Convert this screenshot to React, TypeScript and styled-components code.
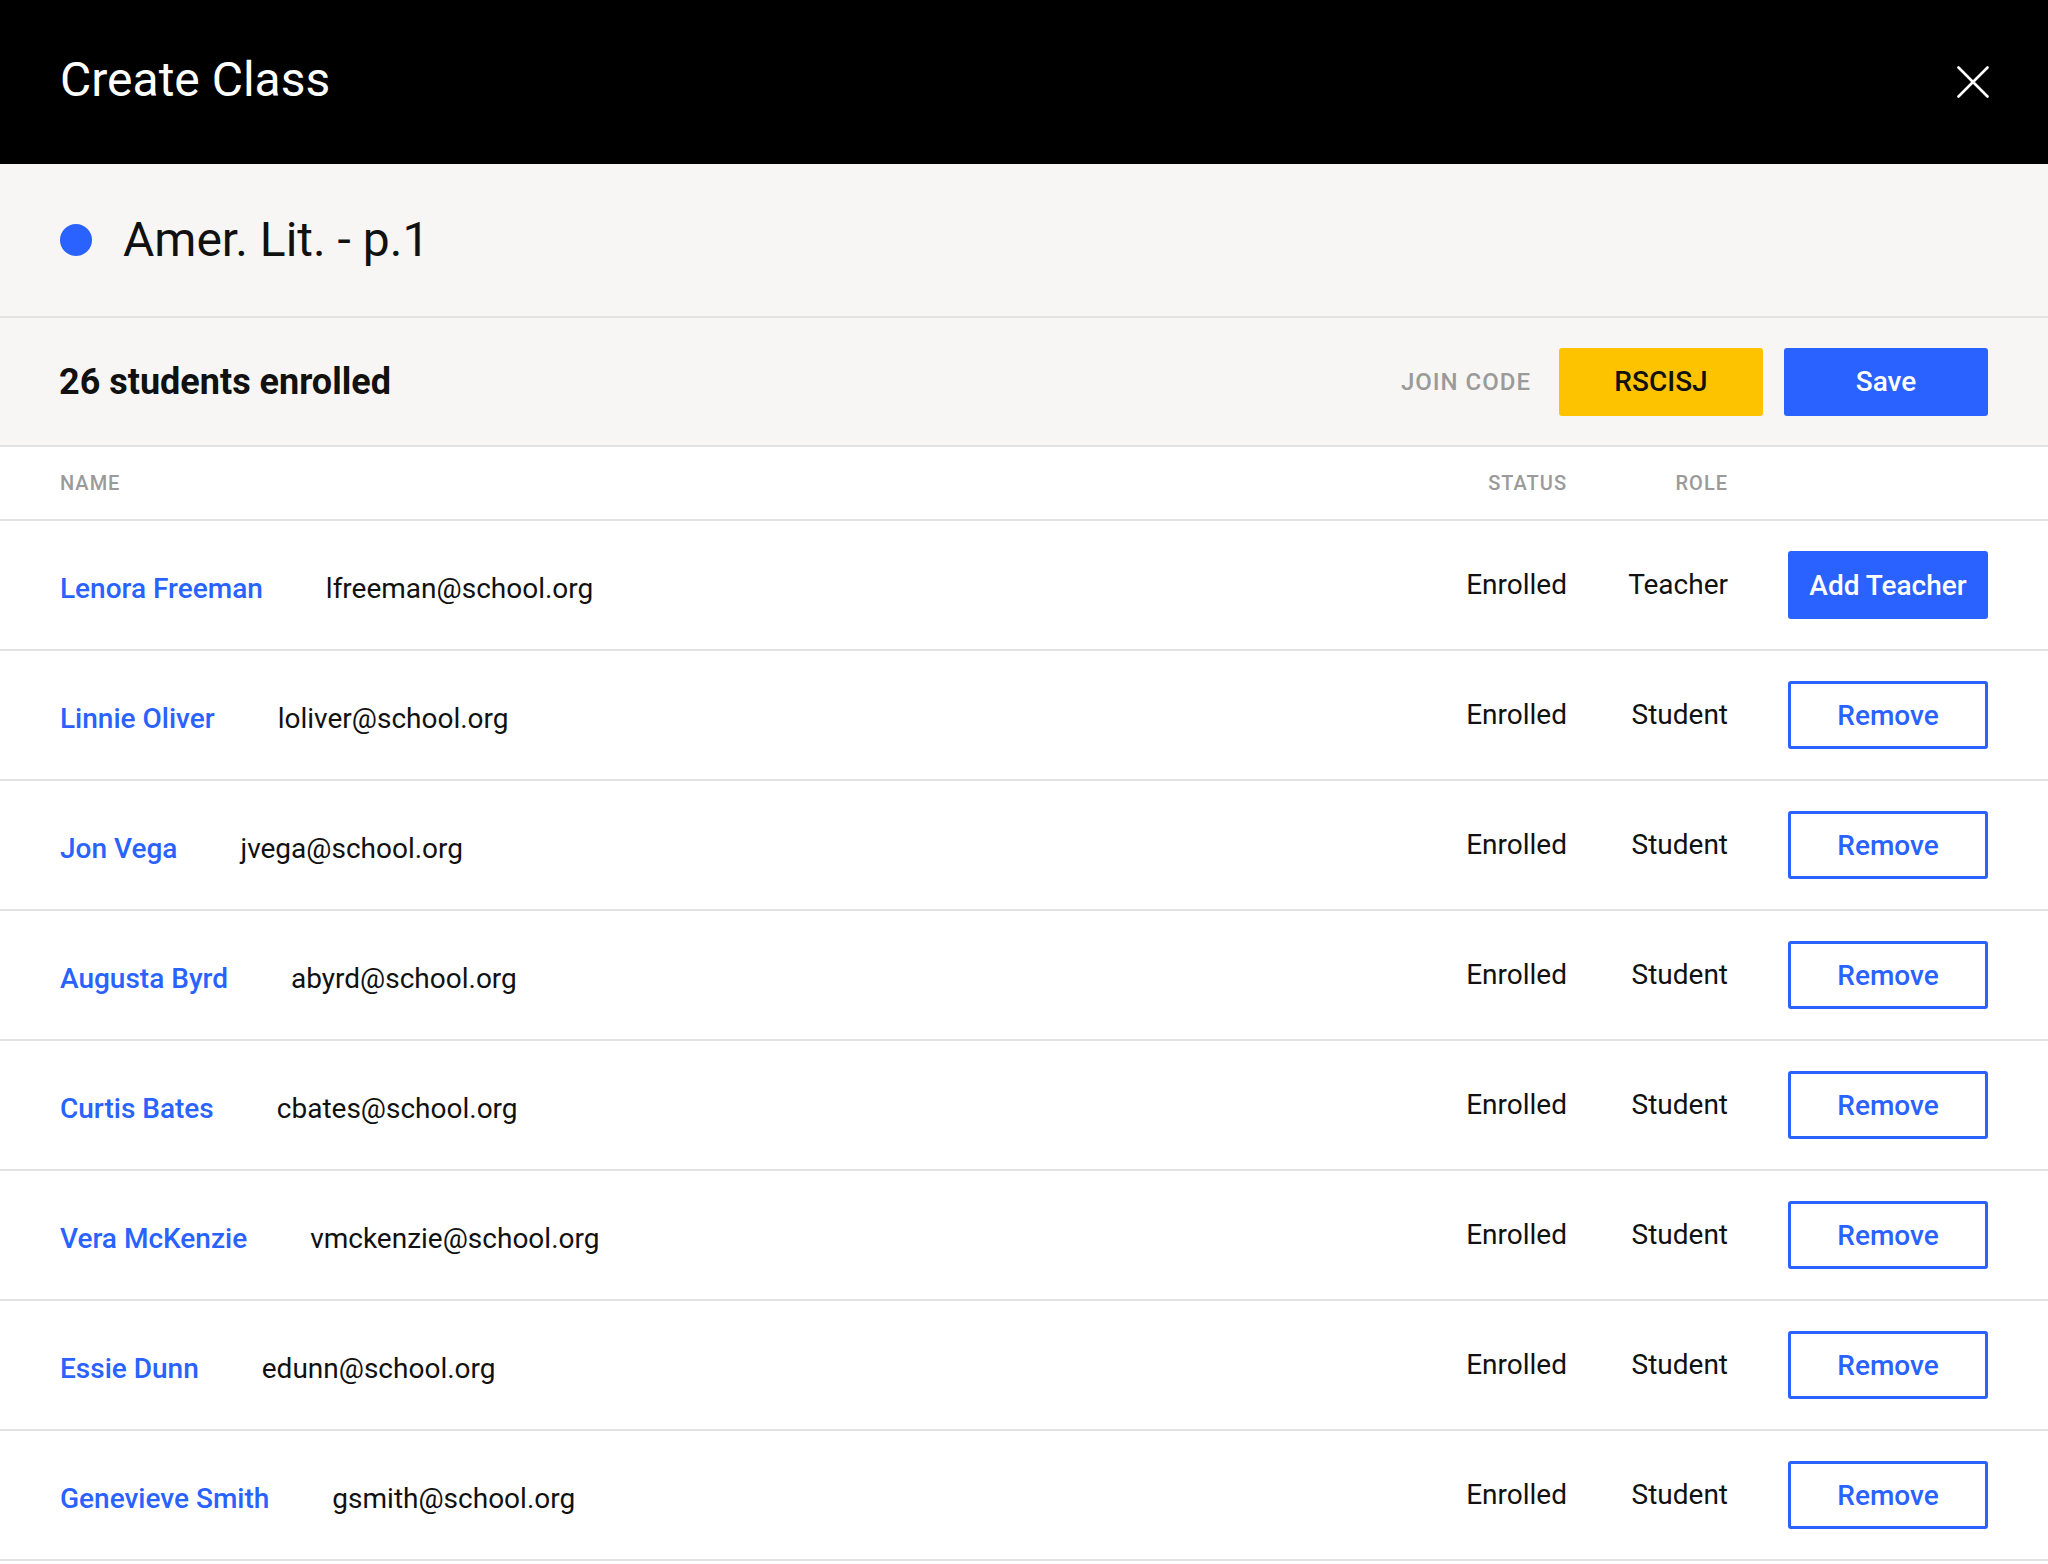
import React from "react";
import styled, { createGlobalStyle } from "styled-components";

const GlobalStyle = createGlobalStyle`
  html, body {
    margin: 0;
    padding: 0;
    background: #ffffff;
  }
  body {
    font-family: Roboto, "Liberation Sans", Arial, sans-serif;
    color: #111111;
  }
  * { box-sizing: border-box; }
`;

const BLUE = "#2962ff";
const LINE = "#e2e2e2";
const MUTED = "#9a9a9a";

const Page = styled.div`
  width: 2048px;
  display: flex;
  flex-direction: column;
`;

const TopBar = styled.header`
  height: 164px;
  background: #000000;
  display: flex;
  align-items: center;
  justify-content: space-between;
  padding: 0 59px 0 60px;
`;

const Title = styled.h1`
  margin: 0;
  padding-bottom: 4px;
  font-size: 48px;
  font-weight: 400;
  color: #ffffff;
  line-height: 1.17;
`;

const CloseButton = styled.button`
  width: 32px;
  height: 32px;
  padding: 0;
  border: none;
  background: transparent;
  display: flex;
  align-items: center;
  justify-content: center;
  cursor: pointer;
`;

const ClassBar = styled.section`
  height: 154px;
  background: #f7f6f4;
  border-bottom: 2px solid ${LINE};
  display: flex;
  align-items: center;
  gap: 31px;
  padding: 0 60px;
`;

const Dot = styled.span<{ $color: string }>`
  width: 32px;
  height: 32px;
  border-radius: 50%;
  background: ${(p) => p.$color};
  flex: none;
`;

const ClassName = styled.h2`
  margin: 0;
  font-size: 48px;
  font-weight: 400;
  color: #111111;
  line-height: 1.17;
`;

const Toolbar = styled.section`
  height: 129px;
  background: #f7f6f4;
  border-bottom: 2px solid ${LINE};
  display: flex;
  align-items: center;
  padding: 0 60px 0 59px;
`;

const Count = styled.h3`
  margin: 0;
  flex: 1;
  font-size: 36px;
  font-weight: 700;
  color: #111111;
`;

const JoinLabel = styled.span`
  font-size: 24px;
  font-weight: 500;
  letter-spacing: 1px;
  color: ${MUTED};
  margin-right: 28px;
`;

const Button = styled.button<{ $variant: "code" | "solid" | "outline"; $w: number }>`
  width: ${(p) => p.$w}px;
  height: 68px;
  border-radius: 3px;
  font-family: Roboto, "Liberation Sans", Arial, sans-serif;
  font-size: 28px;
  font-weight: 500;
  cursor: pointer;
  display: flex;
  align-items: center;
  justify-content: center;
  padding: 0;
  flex: none;
  background: ${(p) =>
    p.$variant === "code" ? "#fdc300" : p.$variant === "solid" ? BLUE : "#ffffff"};
  color: ${(p) => (p.$variant === "code" ? "#111111" : p.$variant === "solid" ? "#ffffff" : BLUE)};
  border: ${(p) => (p.$variant === "outline" ? `3px solid ${BLUE}` : "none")};
`;

const ButtonGap = styled.span`
  width: 21px;
  flex: none;
`;

const Grid = styled.div`
  display: grid;
  grid-template-columns: 1fr 142px 161px 260px;
  align-items: center;
  padding: 0 60px;
  border-bottom: 2px solid ${LINE};
`;

const HeadRow = styled(Grid)`
  height: 74px;
`;

const HeadCell = styled.span<{ $right?: boolean }>`
  font-size: 20px;
  font-weight: 500;
  letter-spacing: 1px;
  color: ${MUTED};
  text-align: ${(p) => (p.$right ? "right" : "left")};
`;

const Row = styled(Grid)`
  height: 130px;
`;

const NameCell = styled.div`
  display: flex;
  align-items: center;
  gap: 63px;
  padding-top: 7px;
  font-size: 28px;
`;

const Name = styled.a`
  color: ${BLUE};
  font-weight: 500;
  text-decoration: none;
`;

const Email = styled.span`
  color: #111111;
  font-weight: 400;
`;

const TextCell = styled.span`
  font-size: 28px;
  color: #111111;
  text-align: right;
  padding-bottom: 1px;
`;

const ActionCell = styled.div`
  display: flex;
  justify-content: flex-end;
`;

type Person = { name: string; email: string; role: "Teacher" | "Student" };

const people: Person[] = [
  { name: "Lenora Freeman", email: "lfreeman@school.org", role: "Teacher" },
  { name: "Linnie Oliver", email: "loliver@school.org", role: "Student" },
  { name: "Jon Vega", email: "jvega@school.org", role: "Student" },
  { name: "Augusta Byrd", email: "abyrd@school.org", role: "Student" },
  { name: "Curtis Bates", email: "cbates@school.org", role: "Student" },
  { name: "Vera McKenzie", email: "vmckenzie@school.org", role: "Student" },
  { name: "Essie Dunn", email: "edunn@school.org", role: "Student" },
  { name: "Genevieve Smith", email: "gsmith@school.org", role: "Student" },
];

export default function App() {
  return (
    <>
      <GlobalStyle />
      <Page>
        <TopBar>
          <Title>Create Class</Title>
          <CloseButton aria-label="Close">
            <svg width="32" height="32" viewBox="0 0 32 32">
              <path d="M1.5 1.5 L30.5 30.5 M30.5 1.5 L1.5 30.5" stroke="#ffffff" strokeWidth="2.6" strokeLinecap="round" />
            </svg>
          </CloseButton>
        </TopBar>
        <ClassBar>
          <Dot $color={BLUE} />
          <ClassName>Amer. Lit. - p.1</ClassName>
        </ClassBar>
        <Toolbar>
          <Count>26 students enrolled</Count>
          <JoinLabel>JOIN CODE</JoinLabel>
          <Button $variant="code" $w={204}>RSCISJ</Button>
          <ButtonGap />
          <Button $variant="solid" $w={204}>Save</Button>
        </Toolbar>
        <HeadRow>
          <HeadCell>NAME</HeadCell>
          <HeadCell $right>STATUS</HeadCell>
          <HeadCell $right>ROLE</HeadCell>
          <span />
        </HeadRow>
        {people.map((p) => (
          <Row key={p.email}>
            <NameCell>
              <Name href="#">{p.name}</Name>
              <Email>{p.email}</Email>
            </NameCell>
            <TextCell>Enrolled</TextCell>
            <TextCell>{p.role}</TextCell>
            <ActionCell>
              {p.role === "Teacher" ? (
                <Button $variant="solid" $w={200}>Add Teacher</Button>
              ) : (
                <Button $variant="outline" $w={200}>Remove</Button>
              )}
            </ActionCell>
          </Row>
        ))}
      </Page>
    </>
  );
}
